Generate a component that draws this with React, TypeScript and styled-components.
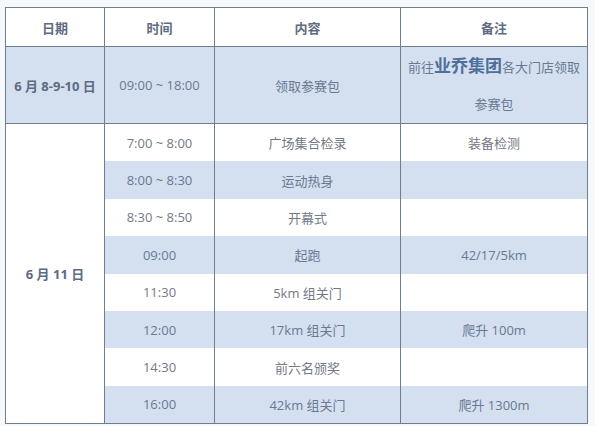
import React from 'react';
import styled, { createGlobalStyle } from 'styled-components';

const GlobalStyle = createGlobalStyle`
  html, body {
    margin: 0;
    padding: 0;
    background: #f6f9fc;
  }
  body {
    font-family: "Open Sans", "Noto Sans CJK SC", sans-serif;
    color: #6b7486;
  }
`;

const Page = styled.div`
  width: 595px;
  height: 426px;
  padding: 7px 0 0 5px;
  box-sizing: border-box;
`;

const Table = styled.table`
  width: 582px;
  table-layout: fixed;
  border-collapse: collapse;
  border: 1px solid #6f7e8d;
  font-size: 13px;
  text-align: center;
`;

const HeadCell = styled.th`
  height: 38px;
  padding: 0;
  background: #ffffff;
  color: #5f6c80;
  font-weight: 600;
  font-size: 13px;
  border: 1px solid #6f7e8d;
`;

const Cell = styled.td<{ $shade?: boolean; $top?: boolean; $tall?: boolean }>`
  height: ${(p) => (p.$tall ? '76px' : '37.4px')};
  padding: 0 4px;
  background: ${(p) => (p.$shade ? '#d4e0f0' : '#ffffff')};
  color: ${(p) => (p.$shade ? '#6a7892' : '#737a86')};
  border-left: 1px solid #6f7e8d;
  border-right: 1px solid #6f7e8d;
  border-top: ${(p) => (p.$top ? '1px solid #6f7e8d' : 'none')};
  vertical-align: middle;
  white-space: nowrap;
`;

const DateCell = styled(Cell)`
  font-weight: 700;
  color: #5d6a80;
`;

const Note = styled.div`
  line-height: 37px;
  white-space: normal;
`;

const Brand = styled.span`
  font-size: 17px;
  font-weight: 700;
  color: #4f6f9b;
`;

const Cjk = styled.span`
  font-family: "Noto Sans CJK SC", sans-serif;
`;

type Row = { time: string; what: string; note: string };

const race: Row[] = [
  { time: '7:00 ~ 8:00', what: '广场集合检录', note: '装备检测' },
  { time: '8:00 ~ 8:30', what: '运动热身', note: '' },
  { time: '8:30 ~ 8:50', what: '开幕式', note: '' },
  { time: '09:00', what: '起跑', note: '42/17/5km' },
  { time: '11:30', what: '5km 组关门', note: '' },
  { time: '12:00', what: '17km 组关门', note: '爬升 100m' },
  { time: '14:30', what: '前六名颁奖', note: '' },
  { time: '16:00', what: '42km 组关门', note: '爬升 1300m' },
];

// wrap CJK runs so they always use the SC glyphs
const mixed = (s: string) =>
  s.split(/([\u3400-\u9fff]+)/).map((part, i) =>
    /[\u3400-\u9fff]/.test(part) ? <Cjk key={i}>{part}</Cjk> : part
  );

export default function App() {
  return (
    <Page lang="zh-CN">
      <GlobalStyle />
      <Table>
        <colgroup>
          <col style={{ width: 99 }} />
          <col style={{ width: 110 }} />
          <col style={{ width: 186 }} />
          <col style={{ width: 187 }} />
        </colgroup>
        <thead>
          <tr>
            <HeadCell>日期</HeadCell>
            <HeadCell>时间</HeadCell>
            <HeadCell>内容</HeadCell>
            <HeadCell>备注</HeadCell>
          </tr>
        </thead>
        <tbody>
          <tr>
            <DateCell $shade $top $tall>6 月 8-9-10 日</DateCell>
            <Cell $shade $top $tall>09:00 ~ 18:00</Cell>
            <Cell $shade $top $tall>领取参赛包</Cell>
            <Cell $shade $top $tall>
              <Note>
                前往<Brand>业乔集团</Brand>各大门店领取
                <br />
                参赛包
              </Note>
            </Cell>
          </tr>
          {race.map((r, i) => (
            <tr key={r.time}>
              {i === 0 && (
                <DateCell $top rowSpan={race.length}>
                  6 月 11 日
                </DateCell>
              )}
              <Cell $shade={i % 2 === 1} $top={i === 0}>{r.time}</Cell>
              <Cell $shade={i % 2 === 1} $top={i === 0}>{mixed(r.what)}</Cell>
              <Cell $shade={i % 2 === 1} $top={i === 0}>{mixed(r.note)}</Cell>
            </tr>
          ))}
        </tbody>
      </Table>
    </Page>
  );
}
